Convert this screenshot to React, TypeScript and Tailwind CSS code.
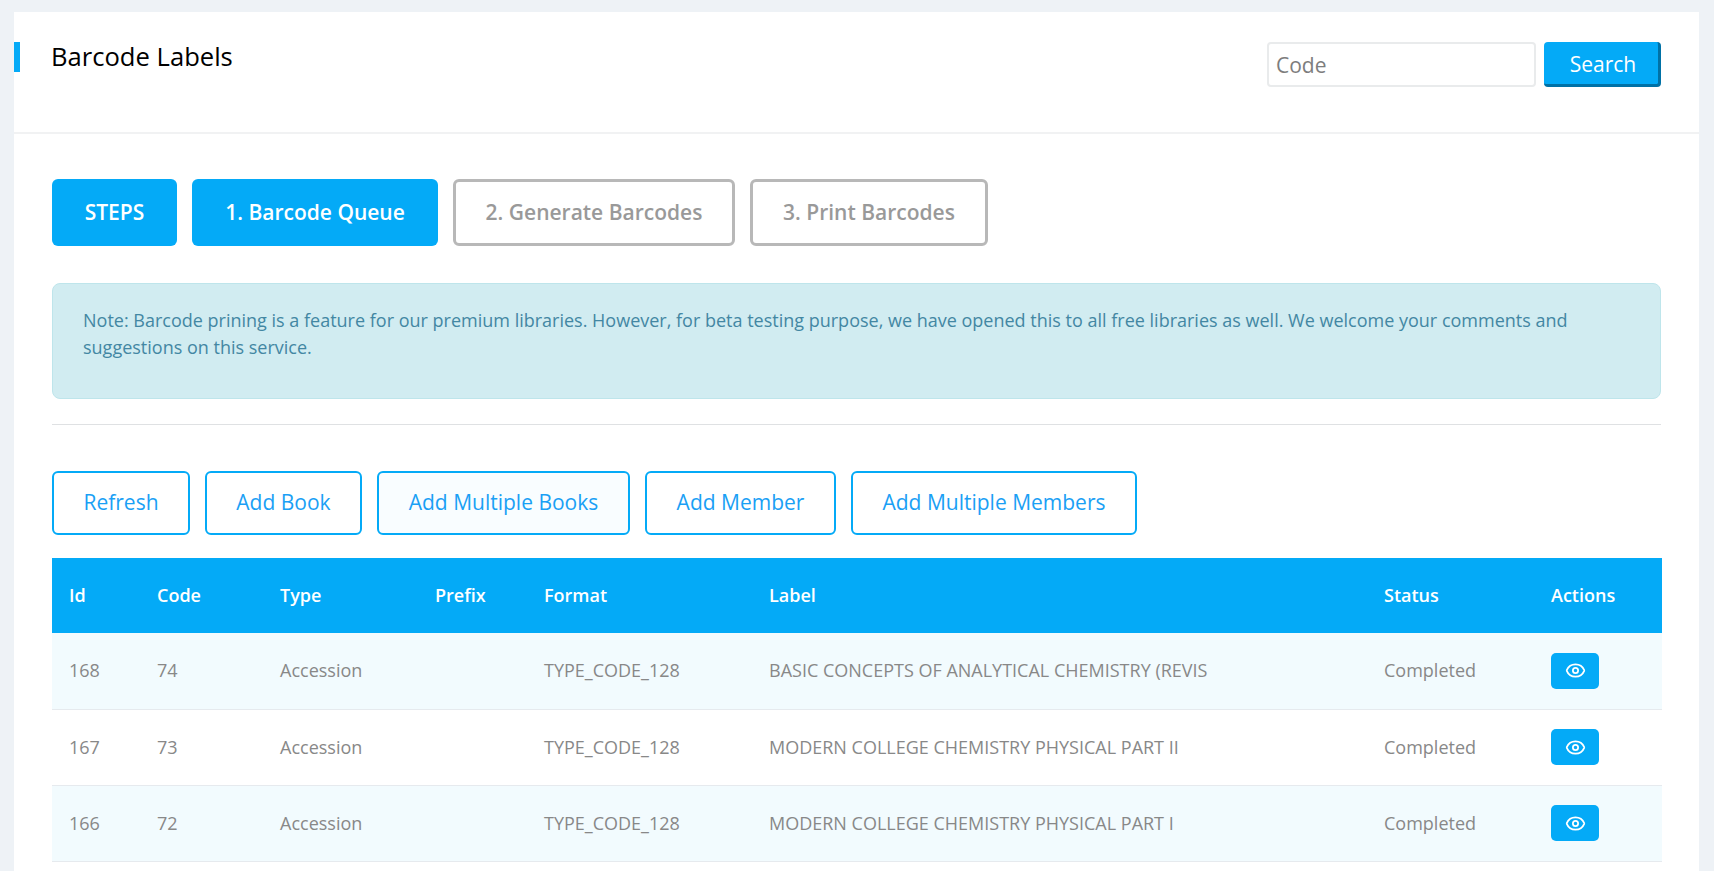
import { Eye } from "lucide-react";

const rows = [
  { id: 168, code: 74, label: "BASIC CONCEPTS OF ANALYTICAL CHEMISTRY (REVIS" },
  { id: 167, code: 73, label: "MODERN COLLEGE CHEMISTRY PHYSICAL PART II" },
  { id: 166, code: 72, label: "MODERN COLLEGE CHEMISTRY PHYSICAL PART I" },
];

const heads = ["Id", "Code", "Type", "Prefix", "Format", "Label", "Status", "Actions"];
const widths = ["w-[88px]", "w-[123px]", "w-[155px]", "w-[109px]", "w-[225px]", "w-[615px]", "w-[167px]", "w-[128px]"];

export default function App() {
  return (
    <div className="h-[871px] overflow-hidden bg-[#eef2f6] pl-[14px] pr-[15px] pt-3 font-['Open_Sans',sans-serif] text-[18px]">
      <div className="h-full bg-white">
        <header className="flex h-[122px] items-start justify-between border-b-2 border-[#f1f2f3] pr-[38px]">
          <h1 className="mt-[30px] border-l-[6px] border-[#04aaf7] pl-[31px] text-[25.6px] leading-[30px] text-black">
            Barcode Labels
          </h1>
          <div className="mt-[30px] flex gap-2">
            <input
              placeholder="Code"
              className="h-[45px] w-[269px] rounded border-2 border-[#e9ebec] px-[7px] text-[21px] outline-none placeholder:text-[#7d7d7d]"
            />
            <button className="h-[45px] w-[117px] rounded border-r-[3px] border-b-[3px] border-[#0071a6] bg-[#04aaf7] pt-1 pl-1 text-[21px] text-white">
              Search
            </button>
          </div>
        </header>

        <main className="px-[38px] pt-[45px]">
          <div className="flex gap-[15px] text-[21px] font-semibold">
            <span className="flex h-[67px] w-[125px] items-center justify-center rounded-md bg-[#04aaf7] text-white">STEPS</span>
            <span className="flex h-[67px] w-[246px] items-center justify-center rounded-md bg-[#04aaf7] text-white">1. Barcode Queue</span>
            <span className="flex h-[67px] w-[282px] items-center justify-center rounded-md border-[3px] border-[#b8b8b8] text-[#999]">2. Generate Barcodes</span>
            <span className="flex h-[67px] w-[238px] items-center justify-center rounded-md border-[3px] border-[#b8b8b8] text-[#999]">3. Print Barcodes</span>
          </div>

          <div className="mt-[37px] h-[116px] rounded-lg border border-[#bee5eb] bg-[#d1ecf1] px-[30px] pt-[23px] leading-[27px] text-[#4387a3]">
            Note: Barcode prining is a feature for our premium libraries. However, for beta testing purpose, we have opened this to all free libraries as well. We welcome your comments and suggestions on this service.
          </div>

          <hr className="mt-[25px] border-t border-[#dfe1e3]" />

          <div className="mt-[46px] flex gap-[15px] text-[21px] text-[#1aa0f5]">
            <button className="h-[64px] w-[138px] rounded-md border-2 border-[#04aaf7]">Refresh</button>
            <button className="h-[64px] w-[157px] rounded-md border-2 border-[#04aaf7]">Add Book</button>
            <button className="h-[64px] w-[253px] rounded-md border-2 border-[#04aaf7] bg-[#f9fdff]">Add Multiple Books</button>
            <button className="h-[64px] w-[191px] rounded-md border-2 border-[#04aaf7]">Add Member</button>
            <button className="h-[64px] w-[286px] rounded-md border-2 border-[#04aaf7]">Add Multiple Members</button>
          </div>

          <table className="mt-[23px] w-full table-fixed border-collapse">
            <colgroup>
              {widths.map((w) => (
                <col key={w} className={w} />
              ))}
            </colgroup>
            <thead>
              <tr className="h-[75px] bg-[#04aaf7] text-left text-white">
                {heads.map((h) => (
                  <th key={h} className="px-[17px] font-semibold">{h}</th>
                ))}
              </tr>
            </thead>
            <tbody className="text-[#888]">
              {rows.map((r, i) => (
                <tr key={r.id} className={`h-[76px] border-b border-[#e6eaee] ${i % 2 === 0 ? "bg-[#f2fbfe]" : "bg-white"}`}>
                  <td className="px-[17px]">{r.id}</td>
                  <td className="px-[17px]">{r.code}</td>
                  <td className="px-[17px]">Accession</td>
                  <td className="px-[17px]"></td>
                  <td className="px-[17px]">TYPE_CODE_128</td>
                  <td className="px-[17px]">{r.label}</td>
                  <td className="px-[17px]">Completed</td>
                  <td className="px-[17px]">
                    <button className="flex h-9 w-12 items-center justify-center rounded-[5px] bg-[#04aaf7] text-white">
                      <Eye size={21} />
                    </button>
                  </td>
                </tr>
              ))}
            </tbody>
          </table>
        </main>
      </div>
    </div>
  );
}
